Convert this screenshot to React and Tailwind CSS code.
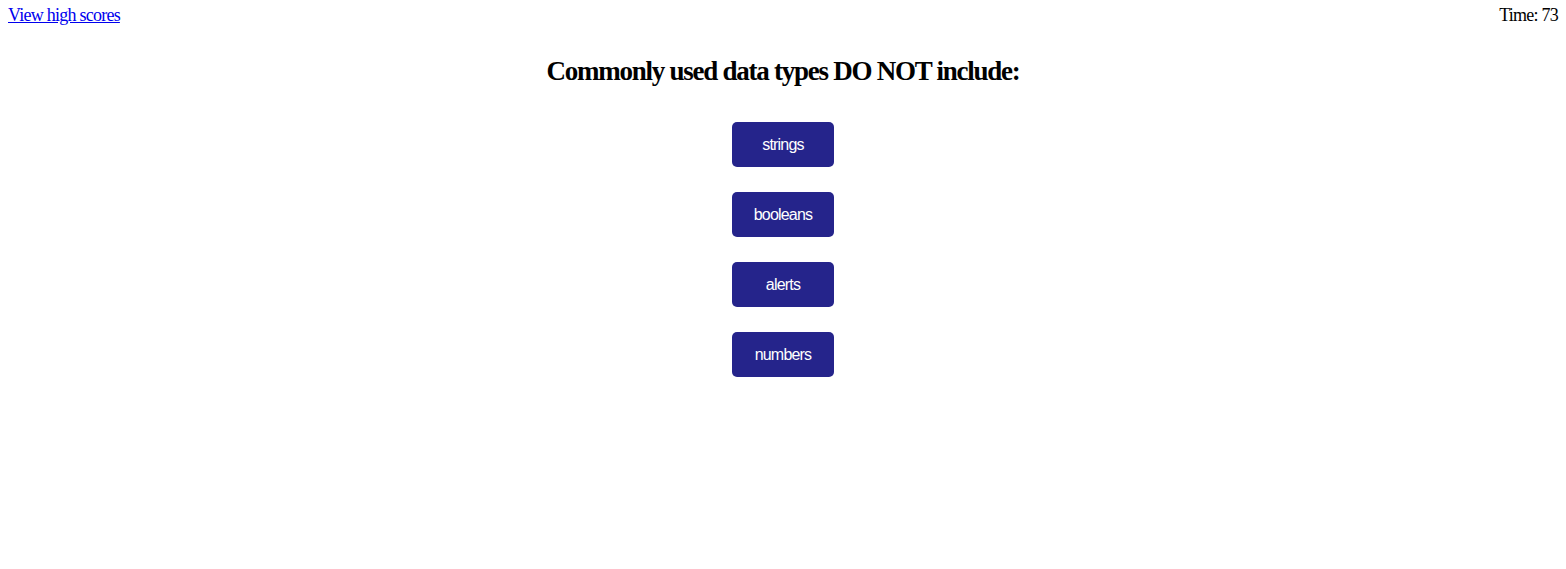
import React from 'react';

const choices = ['strings', 'booleans', 'alerts', 'numbers'];

export default function App() {
  return (
    <div className="min-h-[569px] bg-white font-['Liberation_Serif',serif] text-black">
      {/* Top bar */}
      <header className="flex items-start justify-between px-2 pt-[4px] text-[18px] leading-[22px] tracking-[-0.75px]">
        <a href="#" className="text-[#0000ee] underline">
          View high scores
        </a>
        <span>Time: 73</span>
      </header>

      {/* Question */}
      <main className="flex flex-col items-center">
        <h1 className="mt-[27px] text-[27px] font-bold leading-[36px] tracking-[-1.25px]">
          Commonly used data types DO NOT include:
        </h1>
        <div className="mt-[33px] flex flex-col items-center gap-[25px]">
          {choices.map((choice) => (
            <button
              key={choice}
              className="h-[45px] w-[102px] rounded-[5px] bg-[#25248b] font-['Liberation_Sans',sans-serif] text-[16px] tracking-[-0.8px] text-white"
            >
              {choice}
            </button>
          ))}
        </div>
      </main>
    </div>
  );
}
